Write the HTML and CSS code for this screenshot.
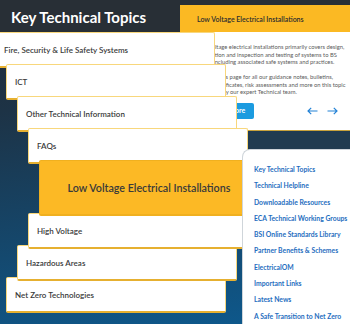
FILE: index.html
```html
<!DOCTYPE html>
<html lang="en">
<head>
    <meta charset="UTF-8">
    <meta name="viewport" content="width=device-width, initial-scale=1.0">
    <title>Key Technical Topics</title>
    <link rel="stylesheet" href="styles.css">
</head>
<body>
    <div class="page">
        <div class="topbar">
            <h1 class="title">Key Technical Topics</h1>
        </div>

        <div class="topic-panel">
            <div class="panel-head">Low Voltage Electrical Installations</div>
            <div class="panel-body">
                <p>Low voltage electrical installations primarily covers design,<br>
                installation and inspection and testing of systems to BS<br>
                7671, including associated safe systems and practices.</p>
                <p>Refer to this page for all our guidance notes, bulletins,<br>
                model certificates, risk assessments and more on this topic<br>
                produced by our expert Technical team.</p>
                <div class="panel-actions">
                    <a class="read-more" href="#">Read more</a>
                    <div class="arrows">
                        <button class="arrow" aria-label="Previous">
                            <svg width="11" height="8" viewBox="0 0 11 8"><path d="M10.5 4H1M4.2 0.8L1 4l3.2 3.2" fill="none" stroke="#2382d6" stroke-width="1.2"/></svg>
                        </button>
                        <button class="arrow" aria-label="Next">
                            <svg width="11" height="8" viewBox="0 0 11 8"><path d="M0.5 4H10M6.8 0.8L10 4 6.8 7.2" fill="none" stroke="#2382d6" stroke-width="1.2"/></svg>
                        </button>
                    </div>
                </div>
            </div>
        </div>

        <div class="band"></div>

        <ul class="topic-stack">
            <li class="topic">Fire, Security &amp; Life Safety Systems</li>
            <li class="topic">ICT</li>
            <li class="topic">Other Technical Information</li>
            <li class="topic">FAQs</li>
            <li class="topic active">Low Voltage Electrical Installations</li>
            <li class="topic">High Voltage</li>
            <li class="topic">Hazardous Areas</li>
            <li class="topic">Net Zero Technologies</li>
        </ul>

        <ul class="sidebar">
            <li><a href="#">Key Technical Topics</a></li>
            <li><a href="#">Technical Helpline</a></li>
            <li><a href="#">Downloadable Resources</a></li>
            <li><a href="#">ECA Technical Working Groups</a></li>
            <li><a href="#">BSI Online Standards Library</a></li>
            <li><a href="#">Partner Benefits &amp; Schemes</a></li>
            <li><a href="#">ElectricalOM</a></li>
            <li><a href="#">Important Links</a></li>
            <li><a href="#">Latest News</a></li>
            <li><a href="#">A Safe Transition to Net Zero</a></li>
        </ul>
    </div>
</body>
</html>
```

FILE: styles.css
```css
* {
    box-sizing: border-box;
}
body {
    margin: 0;
    font-family: Lato, "Noto Sans", Arial, sans-serif;
}
.page {
    display: grid;
    grid-template-columns: 180px 62px 6px 1fr;
    grid-template-rows: 5px 27px 98px 19px 1fr;
    width: 350px;
    height: 324px;
    overflow: hidden;
    background: linear-gradient(172deg, #242b32 0%, #1d3346 30%, #0d5a8f 100%);
}
.topbar {
    grid-column: 1 / -1;
    grid-row: 1 / 3;
    background: #282f36;
    padding: 8px 11px 0;
}
.title {
    margin: 0;
    color: #fff;
    font-size: 15px;
    line-height: 18px;
    font-weight: 700;
}
.topic-panel {
    grid-column: 2 / -1;
    grid-row: 2 / 4;
    display: flex;
    flex-direction: column;
    background: #fff;
}
.panel-head {
    height: 27px;
    display: flex;
    align-items: center;
    padding-left: 17px;
    background: #fbb923;
    color: #2e2e2e;
    font-size: 7px;
    font-weight: 600;
}
.panel-body {
    padding: 11px 7px 0 17px;
    color: #5a5a5a;
    font-size: 5.8px;
    line-height: 7.5px;
}
.panel-body p {
    margin: 0 0 7.5px;
    white-space: nowrap;
}
.panel-actions {
    display: flex;
    align-items: center;
    justify-content: space-between;
    padding-right: 5px;
}
.read-more {
    display: flex;
    align-items: center;
    height: 16px;
    margin-left: 6px;
    padding: 0 9px;
    background: #1b9be0;
    border-radius: 2px;
    color: #fff;
    font-size: 7px;
    font-weight: 700;
    text-decoration: none;
}
.arrows {
    display: flex;
    gap: 9px;
}
.arrow {
    display: flex;
    padding: 0;
    border: 0;
    background: none;
}
.band {
    grid-column: 2 / -1;
    grid-row: 4;
    background: #213b50;
    border-top: 1px solid #c8a23c;
}
.topic-stack {
    grid-column: 1 / -1;
    grid-row: 3 / -1;
    z-index: 2;
    display: flex;
    flex-direction: column;
    align-items: flex-start;
    margin: 0;
    padding: 0;
    list-style: none;
}
.topic {
    display: flex;
    align-items: center;
    width: 220px;
    height: 36px;
    margin-top: -4px;
    padding-left: 8px;
    background: #fff;
    border: 1px solid #f8d77c;
    border-bottom: 2px solid #e6b030;
    border-radius: 2px;
    color: #3a3a3a;
    font-size: 8px;
    font-weight: 600;
}
.topic:nth-child(1) { margin-top: 0; margin-left: -5px; z-index: 1; }
.topic:nth-child(2) { margin-left: 6px; z-index: 2; }
.topic:nth-child(3) { margin-left: 17px; z-index: 3; }
.topic:nth-child(4) { margin-left: 28px; z-index: 4; }
.topic:nth-child(5) { margin-left: 39px; z-index: 9; }
.topic:nth-child(6) { margin-left: 28px; z-index: 8; }
.topic:nth-child(7) { margin-left: 17px; z-index: 7; }
.topic:nth-child(8) { margin-left: 6px; z-index: 6; }
.topic.active {
    height: 56px;
    justify-content: center;
    padding-left: 0;
    background: #fcb925;
    border-color: #f0b01f;
    color: #3a3a3a;
    font-size: 10.7px;
}
.topic.active + .topic {
    margin-top: -3px;
}
.sidebar {
    grid-column: 3 / -1;
    grid-row: 5;
    z-index: 3;
    margin: 0;
    padding: 11px 0 0 11px;
    list-style: none;
    background: #fff;
    border-top: 1px solid #cfd5da;
    border-left: 1px solid #cfd5da;
    border-top-left-radius: 8px;
}
.sidebar li {
    font-size: 6.8px;
    line-height: 16.3px;
    font-weight: 700;
    white-space: nowrap;
}
.sidebar a {
    color: #1f6ec0;
    text-decoration: none;
}
```
